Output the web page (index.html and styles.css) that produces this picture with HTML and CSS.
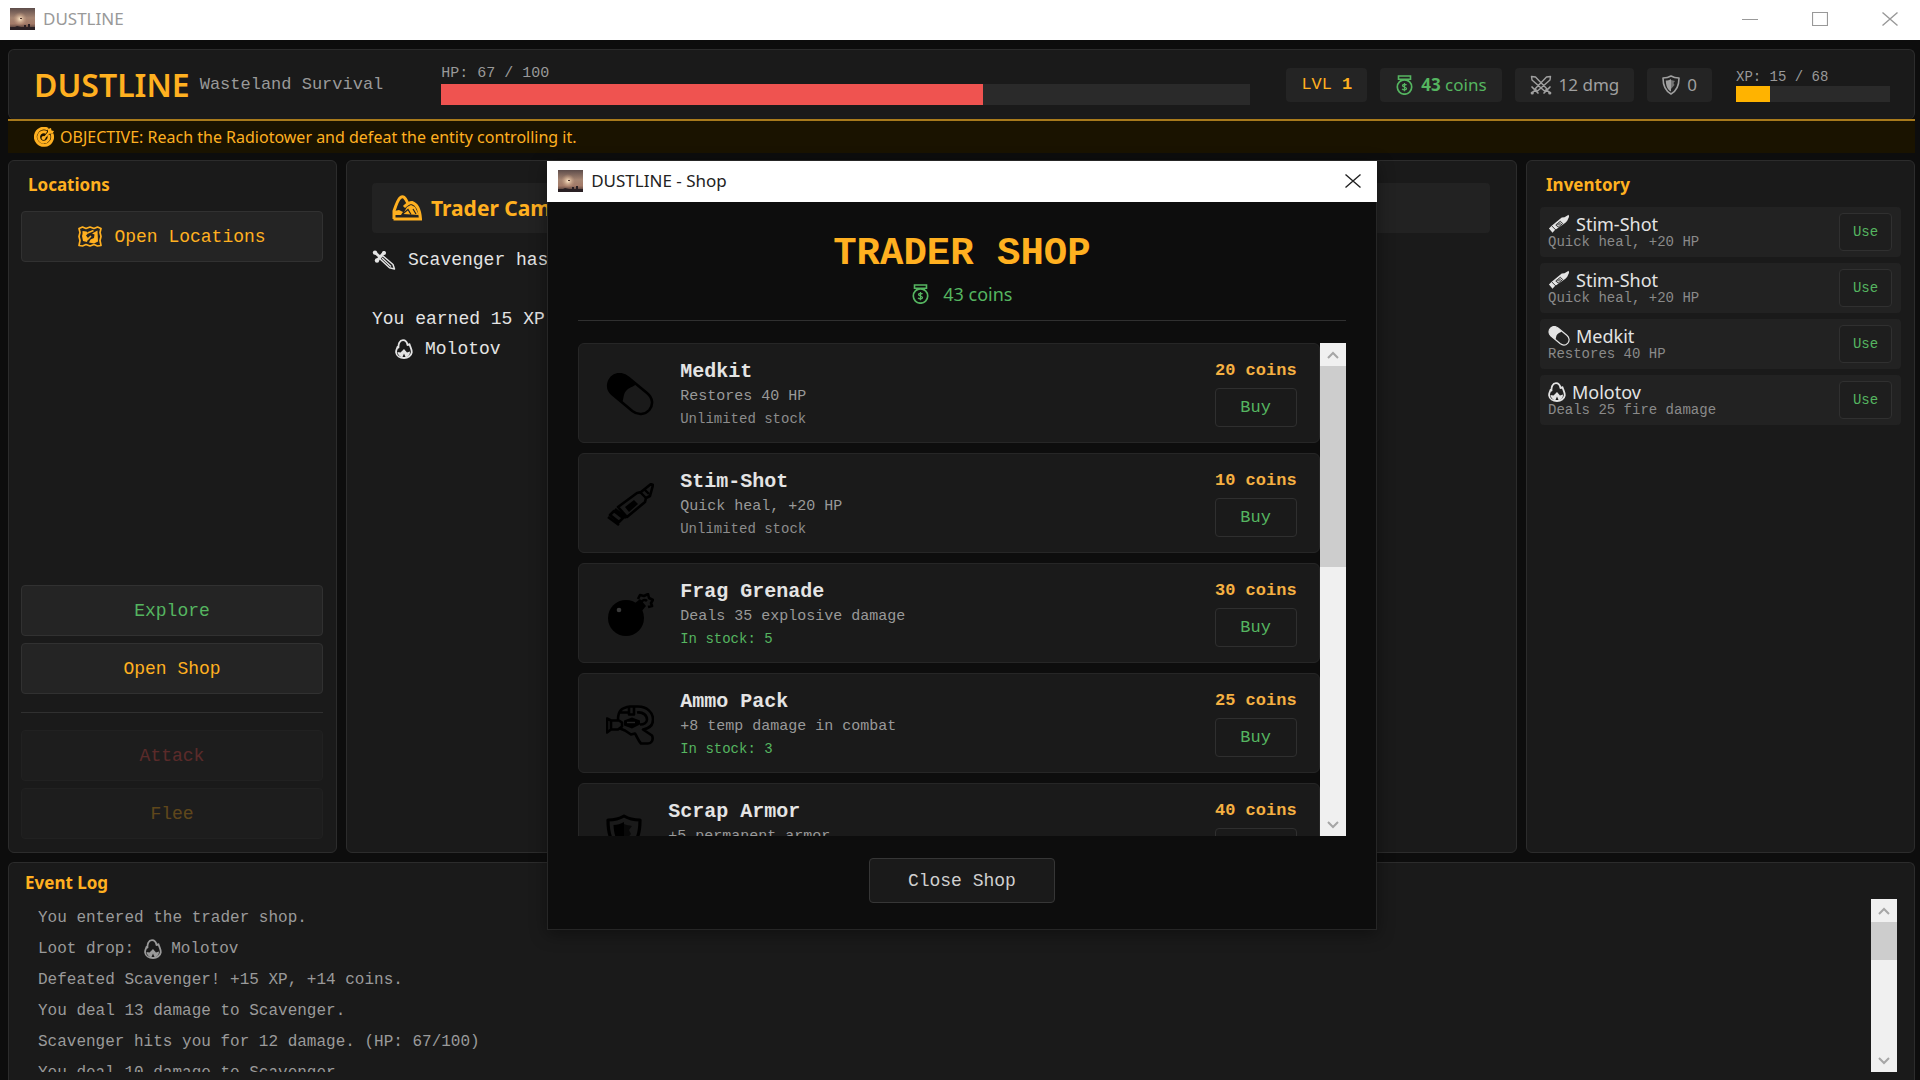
FILE: index.html
```html
<!DOCTYPE html>
<html lang="en">
<head>
<meta charset="utf-8">
<title>DUSTLINE</title>
<link rel="stylesheet" href="styles.css">
</head>
<body>
<svg class="defs" aria-hidden="true">
  <defs>
    <linearGradient id="dusk" x1="0" y1="0" x2="0" y2="1">
      <stop offset="0" stop-color="#5d4c4a"/><stop offset=".45" stop-color="#a68572"/><stop offset=".72" stop-color="#a37a68"/><stop offset="1" stop-color="#2b2023"/>
    </linearGradient>
    <radialGradient id="sun"><stop offset="0" stop-color="#ffe9c8"/><stop offset="1" stop-color="#c79a7c" stop-opacity="0"/></radialGradient>
    <symbol id="i-app" viewBox="0 0 25 22" preserveAspectRatio="none">
      <rect width="25" height="22" fill="url(#dusk)"/><circle cx="10" cy="11" r="7" fill="url(#sun)"/>
      <path d="M0 19h5l2-1 4 1h3v-2h2v2h2v-3h2v3h5v3H0z" fill="#2a2024"/><path d="M10 10h2v1h-2z" fill="#4a2f2a"/>
    </symbol>
    <symbol id="i-target" viewBox="0 0 20 20">
      <path d="M14 2.200a8.600 8.600 0 1 0 4 4.500M12.500 5.500a5.200 5.200 0 1 0 2.200 2.600" fill="none" stroke="currentColor" stroke-width="2.900"/>
      <path d="M9 11l5-6V2l3-1 .5 2.500L20 4l-1.500 2.800H15.500l-5 5z" fill="currentColor"/><circle cx="9.500" cy="11" r="2" fill="currentColor"/>
    </symbol>
    <symbol id="i-map" viewBox="0 0 24 21">
      <path d="M1 2.500l3.500-1.500L8 2.500 12 1l4 1.500L19.500 1 23 2.500l-1 4 1 4-1 4 1 5-3.500.5-3.500-1.500-4 1.500-4-1.500L4.500 20 1 19.500l1-5-1-4 1-4z" fill="none" stroke="currentColor" stroke-width="1.700" stroke-linejoin="round"/>
      <path d="M4.500 5l4 .5 1.500 2-2 2 2 2.500-1 4-4-1-1-5 .5-2zM19.500 4.500l.5 11-4 2-5-1 1.500-3 3.500-1.500.5-3.500-2.500-1z" fill="currentColor"/><path d="M9.500 7l6-2.500M9 14l4-4" stroke="currentColor" stroke-width="1.700"/>
    </symbol>
    <symbol id="i-camp" viewBox="0 0 30 26">
      <path d="M2 24V16C4 10 6 4 8.500 2.500 11 .5 13 2 15.500 7.500L16 9" fill="none" stroke="currentColor" stroke-width="3"/>
      <path d="M12 12c3-3 5-4.500 8-4.500 6 2 8 9 8.500 16.500H1.500" fill="none" stroke="currentColor" stroke-width="3"/>
      <path d="M2 16l5-1 4 2-2 3H2zM11 19l4-7 4-2 4 2 4 8z" fill="currentColor"/><path d="M10 19.500l6-5 3 5M21 14l3 5" stroke="#242424" stroke-width="1.200" fill="none"/>
    </symbol>
    <symbol id="i-sword" viewBox="0 0 24 20">
      <path d="M7.500 8.500l3-3L21 14.500l1.500 4.500-5-1.200z" fill="none" stroke="currentColor" stroke-width="1.500" stroke-linejoin="round"/>
      <path d="M10 8l9 8.500" stroke="currentColor" stroke-width="1.200"/>
      <path d="M3.500 3L8 7" stroke="currentColor" stroke-width="3"/>
      <path d="M12 2.500L5.500 10" stroke="currentColor" stroke-width="2.800" stroke-linecap="round"/><circle cx="3" cy="2.600" r="2.200" fill="currentColor"/><circle cx="5" cy="10.500" r="2.200" fill="currentColor"/><circle cx="12" cy="3" r="2" fill="currentColor"/>
    </symbol>
    <symbol id="i-fire" viewBox="0 0 18 20">
      <path d="M8 1.200c2.500 0 4 2 4.500 4.800l2-.8c.8 3 2.600 5.500 2.200 8.300-.5 3.300-3.700 5.500-7.700 5.500s-7.500-2-7.900-5.500c-.3-2.600 1-3.500 1.400-5.500l1 .6C3.200 5 4.500 1.200 8 1.200z" fill="none" stroke="currentColor" stroke-width="1.800" stroke-linejoin="round"/>
      <path d="M9 10l3 3.500 3-1c0 4-2.500 6-6 6s-6-2-6.500-5.500l3 .5z" fill="currentColor"/><path d="M9 14.500l1.500 3.500h-3z" fill="#1a1a1a"/>
    </symbol>
    <symbol id="i-purse" viewBox="0 0 19 20">
      <path d="M3.500 1h12v3.200h-12zM5 4.200L6.500 6M14 4.200L12.500 6" fill="none" stroke="currentColor" stroke-width="1.600"/>
      <circle cx="9.500" cy="12" r="7.200" fill="none" stroke="currentColor" stroke-width="1.700"/>
      <path d="M11.500 10.200c-.6-1-4-1.300-4 .3 0 1.700 4 1.300 4 3.100 0 1.700-3.600 1.500-4.400.3M9.500 8v8.300" fill="none" stroke="currentColor" stroke-width="1.300"/>
    </symbol>
    <symbol id="i-swords" viewBox="0 0 22 20">
      <path d="M1.500 1.500l4 .5L17 14l-2.500 2L2 5zM20.500 1.500l-4 .5L5 14l2.500 2L20 5z" fill="none" stroke="currentColor" stroke-width="1.400" stroke-linejoin="round"/>
      <path d="M2 12l6 6M20 12l-6 6M5 15l-3 3M17 15l3 3" stroke="currentColor" stroke-width="1.700" stroke-linecap="round"/><circle cx="2.200" cy="18" r="1.600" fill="currentColor"/><circle cx="19.800" cy="18" r="1.600" fill="currentColor"/>
    </symbol>
    <symbol id="i-shield" viewBox="0 0 36 40">
      <path d="M18 2c5 3 10 4 16 4 0 14-3 25-16 32C5 31 2 20 2 6c6 0 11-1 16-4z" fill="none" stroke="currentColor" stroke-width="3.200" stroke-linejoin="round"/>
      <path d="M18 8v25C10.500 29 8 21 7.500 11c4 0 7-1 10.500-3z" fill="currentColor"/>
      <path d="M18 10c3 1 5 1.500 8 2l-3 4 2 4-7 8z" fill="currentColor" opacity=".65"/>
    </symbol>
    <symbol id="i-pill" viewBox="0 0 48 43">
      <path d="M5.500 4.500c5-5 12-4 17 .2L41 20c6 5 6.500 12 2.300 17-4.500 5-11.500 5.400-17 1L6 21C1 16.500 1 9.500 5.500 4.500z" fill="none" stroke="currentColor" stroke-width="2.600"/>
      <path d="M5.500 4.500c5-5 12-4 17 .2L30 11c-3 3.500-7 3-10 7-3 3.500-2 8-4 11.500L6 21C1 16.500 1 9.500 5.500 4.500z" fill="currentColor"/>
    </symbol>
    <symbol id="i-syringe" viewBox="0 0 48 43">
      <path d="M2 34l11 8M4 32l9 7 4-4-9-7zM9 26l11 9M12 24l19-14 4-1 10-8 2 1-3 11-4 2-1 4-18 15z" fill="none" stroke="currentColor" stroke-width="2.600" stroke-linejoin="round"/>
      <path d="M19 24l9-7 4 4-9 8z" fill="currentColor"/><path d="M34 9l6 6M38 6l5 5" stroke="currentColor" stroke-width="2.400"/>
    </symbol>
    <symbol id="i-syringe-fill" viewBox="0 0 24 20">
      <path d="M1 15l3-3 11-9 3-.5L22.500 0 23 2l-2 4.500-2 2-12 8.500-2 2.500z" fill="currentColor"/><path d="M4 12l5 5M8.500 11l5-4 2.500 2.500-5 4z" fill="none" stroke="#242424" stroke-width="1"/><path d="M10 11l4-2" stroke="#777" stroke-width="2"/>
    </symbol>
    <symbol id="i-bomb" viewBox="0 0 48 43">
      <circle cx="20" cy="25" r="18" fill="currentColor"/><path d="M28 11l6-5 6 7-5 6z" fill="currentColor"/>
      <path d="M35 10c1-3 4-4 6-2M32 6l2-4 4 1 4-2 1 4 4 2-2 3 1 3-4 1" fill="none" stroke="currentColor" stroke-width="2.600" stroke-linejoin="round"/>
      <circle cx="13" cy="17" r="2.300" fill="#3a3a3a"/>
    </symbol>
    <symbol id="i-raygun" viewBox="0 0 48 40">
      <path d="M1 14l4 2h8l3 2v4l-4 3H5l-4 3zM5 16v9M12 15C12 6 16 3 24 2h8c9 0 15 6 15 13 0 6-4 9-10 10l9 6c2 5-1 8-4 8h-7c-3-3-4-7-6-10l-4 1-6-4-5-2M23 2v8h5V2M14 8h8M31 8c6-1 10 3 10 7 0 3-3 5-7 5" fill="none" stroke="currentColor" stroke-width="2.600" stroke-linejoin="round"/>
      <path d="M18 16l8-3 8 3v4l-8 4-8-3z" fill="currentColor"/><path d="M21 18h8" stroke="#242424" stroke-width="1.400"/>
    </symbol>
    <symbol id="i-min" viewBox="0 0 16 16"><path d="M0 8.500h16" stroke="currentColor"/></symbol>
    <symbol id="i-max" viewBox="0 0 16 16"><path d="M.5 1.500h15v13H.5z" fill="none" stroke="currentColor" stroke-width="1.200"/></symbol>
    <symbol id="i-close" viewBox="0 0 16 16"><path d="M.5 1.500l15 13M15.500 1.500l-15 13" stroke="currentColor" stroke-width="1.400"/></symbol>
    <symbol id="i-up" viewBox="0 0 12 8"><path d="M1 7l5-5 5 5" fill="none" stroke="currentColor" stroke-width="2"/></symbol>
    <symbol id="i-down" viewBox="0 0 12 8"><path d="M1 1l5 5 5-5" fill="none" stroke="currentColor" stroke-width="2"/></symbol>
  </defs>
</svg>

<div class="app">
  <header class="titlebar">
    <svg class="app-icon"><use href="#i-app"/></svg>
    <span class="titlebar-text">DUSTLINE</span>
    <div class="window-buttons">
      <button aria-label="Minimize"><svg><use href="#i-min"/></svg></button>
      <button aria-label="Maximize"><svg><use href="#i-max"/></svg></button>
      <button aria-label="Close"><svg><use href="#i-close"/></svg></button>
    </div>
  </header>

  <div class="content">
    <section class="status panel">
      <h1 class="brand">DUSTLINE</h1>
      <span class="tagline">Wasteland Survival</span>
      <div class="hp">
        <span class="hp-label">HP: 67 / 100</span>
        <div class="bar"><div class="bar-fill hp-fill" style="width:67%"></div></div>
      </div>
      <div class="chips">
        <div class="chip gold lvl">LVL <b>1</b></div>
        <div class="chip green"><svg class="ic-purse"><use href="#i-purse"/></svg><span><b>43</b> coins</span></div>
        <div class="chip"><svg class="ic-swords"><use href="#i-swords"/></svg>12 dmg</div>
        <div class="chip"><svg class="ic-shield"><use href="#i-shield"/></svg>0</div>
      </div>
      <div class="xp">
        <span class="xp-label">XP: 15 / 68</span>
        <div class="bar xp-bar"><div class="bar-fill xp-fill" style="width:22%"></div></div>
      </div>
    </section>
    <div class="objective"><svg class="ic-target"><use href="#i-target"/></svg>OBJECTIVE: Reach the Radiotower and defeat the entity controlling it.</div>

    <main class="columns">
      <section class="panel actions">
        <h2>Locations</h2>
        <button class="action gold"><svg class="ic-map"><use href="#i-map"/></svg>Open Locations</button>
        <div class="spacer"></div>
        <button class="action green">Explore</button>
        <button class="action gold">Open Shop</button>
        <hr>
        <button class="action red" disabled>Attack</button>
        <button class="action gold" disabled>Flee</button>
      </section>

      <section class="panel scene">
        <div class="scene-title"><svg class="ic-camp"><use href="#i-camp"/></svg>Trader Camp</div>
        <p class="line first"><svg class="ic-sword"><use href="#i-sword"/></svg>Scavenger has</p>
        <p class="line">You earned 15 XP</p>
        <p class="line loot"><svg class="ic-fire"><use href="#i-fire"/></svg>Molotov</p>
      </section>

      <section class="panel inventory">
        <h2>Inventory</h2>
        <ul>
          <li><div><div class="inv-name"><svg class="ic-syr"><use href="#i-syringe-fill"/></svg>Stim-Shot</div><div class="inv-desc">Quick heal, +20 HP</div></div><button class="use">Use</button></li>
          <li><div><div class="inv-name"><svg class="ic-syr"><use href="#i-syringe-fill"/></svg>Stim-Shot</div><div class="inv-desc">Quick heal, +20 HP</div></div><button class="use">Use</button></li>
          <li><div><div class="inv-name"><svg class="ic-syr"><use href="#i-pill"/></svg>Medkit</div><div class="inv-desc">Restores 40 HP</div></div><button class="use">Use</button></li>
          <li><div><div class="inv-name"><svg class="ic-fire"><use href="#i-fire"/></svg>Molotov</div><div class="inv-desc">Deals 25 fire damage</div></div><button class="use">Use</button></li>
        </ul>
      </section>
    </main>

    <section class="panel log">
      <h2>Event Log</h2>
      <div class="log-body">
        <ul class="log-list">
          <li>You entered the trader shop.</li>
          <li>Loot drop: <svg class="ic-fire"><use href="#i-fire"/></svg> Molotov</li>
          <li>Defeated Scavenger! +15 XP, +14 coins.</li>
          <li>You deal 13 damage to Scavenger.</li>
          <li>Scavenger hits you for 12 damage. (HP: 67/100)</li>
          <li>You deal 10 damage to Scavenger.</li>
        </ul>
        <div class="scrollbar">
          <button aria-label="Scroll up"><svg><use href="#i-up"/></svg></button>
          <div class="track"><div class="thumb" style="height:30%"></div></div>
          <button aria-label="Scroll down"><svg><use href="#i-down"/></svg></button>
        </div>
      </div>
    </section>
  </div>
</div>

<div class="modal" role="dialog" aria-label="DUSTLINE - Shop">
  <header class="titlebar modal-bar">
    <svg class="app-icon"><use href="#i-app"/></svg>
    <span class="titlebar-text">DUSTLINE - Shop</span>
    <div class="window-buttons"><button aria-label="Close shop window"><svg><use href="#i-close"/></svg></button></div>
  </header>
  <div class="shop">
    <h2 class="shop-title">TRADER SHOP</h2>
    <div class="shop-coins green"><svg class="ic-purse"><use href="#i-purse"/></svg>43 coins</div>
    <hr>
    <div class="shop-body">
      <ul class="shop-list">
        <li class="item"><svg class="item-icon"><use href="#i-pill"/></svg><div class="item-info"><h3>Medkit</h3><p>Restores 40 HP</p><small>Unlimited stock</small></div><div class="item-buy"><span class="price">20 coins</span><button class="buy">Buy</button></div></li>
        <li class="item"><svg class="item-icon"><use href="#i-syringe"/></svg><div class="item-info"><h3>Stim-Shot</h3><p>Quick heal, +20 HP</p><small>Unlimited stock</small></div><div class="item-buy"><span class="price">10 coins</span><button class="buy">Buy</button></div></li>
        <li class="item"><svg class="item-icon"><use href="#i-bomb"/></svg><div class="item-info"><h3>Frag Grenade</h3><p>Deals 35 explosive damage</p><small class="green">In stock: 5</small></div><div class="item-buy"><span class="price">30 coins</span><button class="buy">Buy</button></div></li>
        <li class="item"><svg class="item-icon"><use href="#i-raygun"/></svg><div class="item-info"><h3>Ammo Pack</h3><p>+8 temp damage in combat</p><small class="green">In stock: 3</small></div><div class="item-buy"><span class="price">25 coins</span><button class="buy">Buy</button></div></li>
        <li class="item"><svg class="item-icon narrow"><use href="#i-shield"/></svg><div class="item-info"><h3>Scrap Armor</h3><p>+5 permanent armor</p><small class="green">In stock: 2</small></div><div class="item-buy"><span class="price">40 coins</span><button class="buy">Buy</button></div></li>
      </ul>
      <div class="scrollbar">
        <button aria-label="Scroll up"><svg><use href="#i-up"/></svg></button>
        <div class="track"><div class="thumb" style="height:45%"></div></div>
        <button aria-label="Scroll down"><svg><use href="#i-down"/></svg></button>
      </div>
    </div>
    <button class="close-shop">Close Shop</button>
  </div>
</div>
</body>
</html>
```
FILE: styles.css
```css
:root {
  --bg: #0d0d0d;
  --panel: #1a1a1a;
  --raised: #242424;
  --line: #2c2c2c;
  --gold: #ffb020;
  --green: #55b560;
  --muted: #999;
  --text: #e4e4e4;
  --mono: "Liberation Mono", monospace;
  --sans: "Noto Sans", "Open Sans", sans-serif;
}

* { box-sizing: border-box; }
body { margin: 0; background: var(--bg); color: var(--text); font: 18px/24px var(--mono); overflow: hidden; }
h1, h2, h3, p, ul { margin: 0; padding: 0; }
ul { list-style: none; }
button { font: inherit; color: inherit; margin: 0; padding: 0; cursor: pointer; }
svg { flex: none; }
hr { width: 100%; height: 1px; margin: 0; border: 0; background: #303030; }
.defs { position: absolute; width: 0; height: 0; }
.gold { color: var(--gold); }
.green { color: var(--green); }
.red { color: #ef5350; }

.app { height: 100vh; display: flex; flex-direction: column; }

.titlebar { flex: none; height: 40px; display: flex; align-items: center; gap: 8px; padding: 0 22px 2px 10px; background: #fff; color: #999; font: 17px/24px var(--sans); }
.app-icon { width: 25px; height: 22px; }
.window-buttons { margin-left: auto; display: flex; gap: 54px; }
.window-buttons button { display: flex; border: 0; background: none; }
.window-buttons svg { width: 16px; height: 16px; }

.content { flex: 1; min-height: 0; display: flex; flex-direction: column; padding: 9px 5px 0 8px; }
.panel { background: var(--panel); border: 1px solid var(--line); border-radius: 6px; }
h2 { font: bold 17px/24px var(--sans); color: var(--gold); }

/* player status */
.status { flex: none; height: 70px; display: flex; align-items: center; padding: 0 24px 0 25px; border-bottom: 0; }
.brand { font: 600 32px/40px var(--sans); color: var(--gold); }
.tagline { margin-left: 10px; font-size: 17px; color: var(--muted); }
.hp { flex: 1; margin: 0 36px 0 58px; }
.hp-label, .xp-label { display: block; color: var(--muted); }
.hp-label { font-size: 15px; line-height: 20px; }
.bar { height: 21px; background: #2a2a2a; }
.bar-fill { height: 100%; }
.hp-fill { background: #ef5350; }
.xp-fill { background: #ffb300; }
.chips { display: flex; gap: 13px; }
.chip { display: flex; align-items: center; gap: 7px; height: 34px; padding: 0 15px; border-radius: 4px; background: var(--raised); color: #a0a0a0; font: 17px/24px var(--sans); }
.chip.gold { color: var(--gold); }
.chip.green { color: var(--green); }
.chip.lvl { gap: 10px; font-family: var(--mono); }
.xp { width: 154px; margin-left: 24px; }
.xp-label { font-size: 14px; line-height: 18px; }
.xp-bar { height: 16px; }
.objective { flex: none; height: 34px; display: flex; align-items: center; gap: 6px; padding-left: 26px; border-top: 2px solid #a87a1c; background: #1a1300; color: var(--gold); font: 16px/24px var(--sans); }

.ic-purse { width: 19px; height: 20px; }
.ic-shield { width: 18px; height: 20px; }
.ic-swords { width: 22px; height: 20px; }
.ic-target { width: 20px; height: 20px; }
.ic-map { width: 24px; height: 21px; }
.ic-camp { width: 30px; height: 26px; }
.ic-sword { width: 24px; height: 20px; }
.ic-fire { width: 18px; height: 20px; }
.ic-syr { width: 22px; height: 20px; }

/* three main columns */
.columns { flex: 1; min-height: 0; display: grid; grid-template-columns: 329px 1fr 389px; gap: 9px; margin-top: 7px; }
.actions { display: flex; flex-direction: column; gap: 7px; padding: 12px 13px 13px 12px; }
.actions h2 { padding-left: 7px; margin-bottom: 7px; }
.actions hr { margin: 11px 0 10px; }
.spacer { flex: 1; }
.action { height: 51px; display: flex; align-items: center; justify-content: center; gap: 12px; background: var(--raised); border: 1px solid #313131; border-radius: 4px; }
.action.gold { color: var(--gold); }
.action.green { color: var(--green); }
.action.red { color: #ef5350; }
.action:disabled { opacity: .3; cursor: default; }
.scene { padding: 22px 26px 22px 25px; }
.scene-title { height: 50px; display: flex; align-items: center; gap: 9px; padding-left: 20px; border-radius: 4px; background: #222; color: var(--gold); font: bold 21px/24px var(--sans); }
.line { height: 30px; display: flex; align-items: center; gap: 12px; line-height: 30px; }
.line.first { margin: 12px 0 29px; }
.line.loot { padding-left: 23px; }
.inventory { padding: 12px 13px; }
.inventory h2 { padding-left: 6px; margin-bottom: 10px; }
.inventory ul { display: grid; gap: 6px; }
.inventory li { height: 50px; display: flex; justify-content: space-between; align-items: center; padding: 0 9px 0 8px; border-radius: 4px; background: #222; }
.inv-name { display: flex; align-items: center; gap: 6px; font: 18px/20px var(--sans); }
.inv-desc { font-size: 14px; line-height: 16px; color: #8a8a8a; }
.use { width: 53px; height: 38px; border: 1px solid #303030; border-radius: 4px; background: #1e1e1e; color: var(--green); font-size: 14px; }

/* event log */
.log { flex: none; height: 218px; margin-top: 9px; padding: 8px 17px 8px 16px; border-bottom: 0; border-radius: 6px 6px 0 0; display: flex; flex-direction: column; gap: 4px; }
.log-body { flex: 1; min-height: 0; display: flex; justify-content: space-between; }
.log-list { overflow: hidden; padding: 4px 0 0 13px; color: #9a9a9a; font-size: 16px; }
.log-list li { height: 31px; line-height: 31px; white-space: pre; }
.log-list svg { vertical-align: middle; }
.scrollbar { flex: none; width: 26px; display: flex; flex-direction: column; background: #f0f0f0; }
.scrollbar button { height: 23px; display: flex; align-items: center; justify-content: center; border: 0; background: none; color: #a6a6a6; }
.scrollbar svg { width: 12px; height: 8px; }
.track { flex: 1; }
.thumb { background: #cdcdcd; }

/* shop window */
.modal { position: absolute; left: 28.5%; top: 161px; width: 43.2%; background: var(--bg); border: 1px solid #262626; border-top: 0; box-shadow: 0 4px 16px rgba(0, 0, 0, .4); }
.modal-bar { height: 41px; padding: 0 16px 2px 11px; margin: 0 -1px; color: #222; }
.shop { display: flex; flex-direction: column; align-items: center; padding: 28px 30px 26px; }
.shop-title { font: bold 39px/48px var(--mono); }
.shop-coins { display: flex; align-items: center; gap: 13px; margin: 4px 0 14px; font: 18px/24px var(--sans); }
.shop-body { align-self: stretch; height: 493px; display: flex; margin: 22px 0; }
.shop-list { flex: 1; overflow: hidden; }
.item { height: 100px; margin-bottom: 10px; display: flex; align-items: center; padding: 2px 22px 0 27px; background: var(--panel); border: 1px solid #262626; border-radius: 6px; }
.item-icon { width: 48px; height: 43px; margin-right: 26px; color: #000; }
.item-icon.narrow { width: 36px; height: 40px; }
.item-info { flex: 1; }
.item-info h3 { font-size: 20px; line-height: 26px; }
.item-info p { font-size: 15px; line-height: 24px; color: var(--muted); }
.item-info small { display: block; font-size: 14px; line-height: 20px; color: #8c8c8c; }
.item-info small.green { color: var(--green); }
.item-buy { display: flex; flex-direction: column; align-items: flex-end; gap: 5px; padding-bottom: 2px; }
.price { font-weight: bold; font-size: 17px; color: #f5b042; }
.buy { width: 82px; height: 39px; border: 1px solid #2f2f2f; border-radius: 4px; background: none; color: var(--green); font-size: 17px; }
.close-shop { width: 186px; height: 45px; border: 1px solid #363636; border-radius: 4px; background: var(--panel); color: #d0d0d0; }
```
